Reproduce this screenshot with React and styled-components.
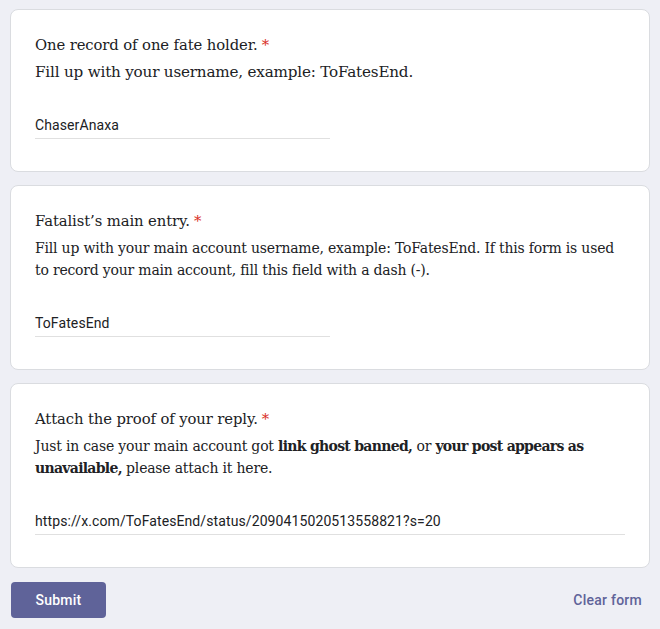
import React from 'react';
import styled, { createGlobalStyle } from 'styled-components';

const GlobalStyle = createGlobalStyle`
  html, body {
    margin: 0;
    padding: 0;
    background: #eeeff5;
  }
  * {
    box-sizing: border-box;
  }
`;

const Page = styled.div`
  min-height: 629px;
  padding: 9px 10px 12px 10px;
  display: flex;
  flex-direction: column;
  gap: 13px;
`;

const Card = styled.div`
  background: #fff;
  border: 1px solid #dadce0;
  border-radius: 8px;
  padding: 23px 24px 32px 24px;
`;

const Title = styled.div`
  font-family: "DejaVu Serif", "Liberation Serif", serif;
  font-size: 14.8px;
  line-height: 24px;
  color: #202124;
  letter-spacing: -0.1px;
`;

const Required = styled.span`
  color: #d93025;
  margin-left: 4px;
`;

const Description = styled.div`
  margin-top: 4px;
  font-family: "DejaVu Serif", "Liberation Serif", serif;
  font-size: ${({ wide }) => (wide ? '15.2px' : '14px')};
  line-height: 22px;
  color: #202124;
  letter-spacing: -0.2px;

  b {
    font-weight: 700;
    letter-spacing: -0.7px;
  }
`;

const Field = styled.div`
  margin-top: 32px;
  width: ${({ full }) => (full ? '100%' : '50%')};
  padding-bottom: 3px;
  border-bottom: 1px solid #e0e0e0;
  font-family: Roboto, "Liberation Sans", sans-serif;
  font-size: 14px;
  line-height: 20px;
  color: #202124;
  letter-spacing: 0.1px;
`;

const Footer = styled.div`
  display: flex;
  align-items: center;
  justify-content: space-between;
  margin-top: 1px;
  padding-left: 1px;
`;

const SubmitButton = styled.button`
  width: 95px;
  height: 36px;
  border: none;
  border-radius: 4px;
  background: #5f6399;
  color: #fff;
  font-family: Roboto, "Liberation Sans", sans-serif;
  font-weight: 500;
  font-size: 14px;
  letter-spacing: 0.25px;
  cursor: pointer;
`;

const ClearButton = styled.button`
  border: none;
  background: transparent;
  color: #5f6399;
  font-family: Roboto, "Liberation Sans", sans-serif;
  font-weight: 500;
  font-size: 14px;
  letter-spacing: 0.25px;
  padding: 8px 8px;
  cursor: pointer;
`;

const Question = ({ title, children, value, full, wide }) => (
  <Card>
    <Title>
      {title}
      <Required>*</Required>
    </Title>
    <Description wide={wide}>{children}</Description>
    <Field full={full}>{value}</Field>
  </Card>
);

export default function App() {
  return (
    <>
      <GlobalStyle />
      <Page>
        <Question title="One record of one fate holder." value="ChaserAnaxa" wide>
          Fill up with your username, example: ToFatesEnd.
        </Question>
        <Question title="Fatalist’s main entry." value="ToFatesEnd">
          Fill up with your main account username, example: ToFatesEnd. If this form is used
          to record your main account, fill this field with a dash (-).
        </Question>
        <Question
          title="Attach the proof of your reply."
          value="https://x.com/ToFatesEnd/status/2090415020513558821?s=20"
          full
        >
          Just in case your main account got <b>link ghost banned,</b> or <b>your post appears as
          unavailable,</b> please attach it here.
        </Question>
        <Footer>
          <SubmitButton>Submit</SubmitButton>
          <ClearButton>Clear form</ClearButton>
        </Footer>
      </Page>
    </>
  );
}
